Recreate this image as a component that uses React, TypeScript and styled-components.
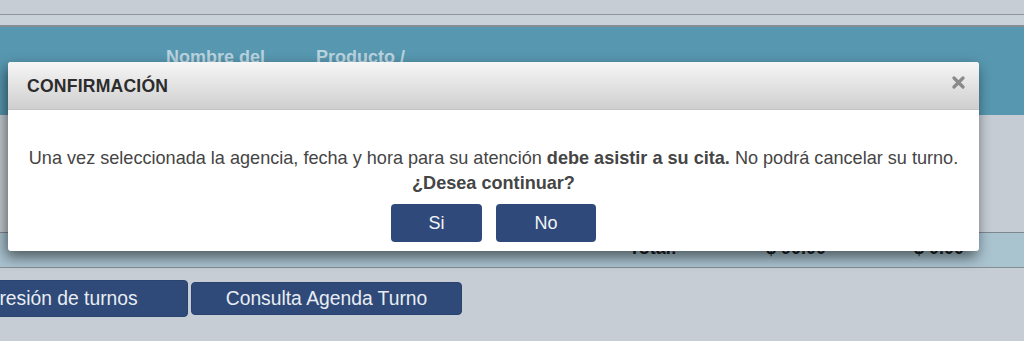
import React from "react";
import styled, { createGlobalStyle } from "styled-components";

const Global = createGlobalStyle`
  html, body { margin: 0; padding: 0; }
  body {
    background: #c6cdd5;
    font-family: "Liberation Sans", Arial, sans-serif;
    width: 1024px;
    height: 341px;
    overflow: hidden;
  }
`;

const Page = styled.div`
  position: relative;
  width: 1024px;
  height: 341px;
  overflow: hidden;
  background: #c6cdd5;
`;

const TopBand = styled.div`
  height: 14px;
  border-bottom: 1px solid #8e969e;
`;

const SubBand = styled.div`
  height: 10px;
  background: #c9d2d9;
  border-bottom: 2px solid #858d95;
`;

const TableHead = styled.div`
  height: 88px;
  background: #5797b0;
  display: flex;
  align-items: flex-start;
  padding-top: 20px;
  box-sizing: border-box;
`;

const HeadCell = styled.div<{ $w: number }>`
  width: ${(p) => p.$w}px;
  flex: none;
  color: #b9d3df;
  font-weight: bold;
  font-size: 18px;
`;

const TableBody = styled.div`
  height: 117px;
  background: #c5ccd3;
  border-bottom: 1px solid #7f878e;
`;

const TotalRow = styled.div`
  height: 35px;
  background: #a9c3cf;
  border-bottom: 1px solid #858d94;
  display: flex;
  align-items: flex-end;
  padding-bottom: 8px;
  box-sizing: border-box;
`;

const TotalCell = styled.div<{ $w: number }>`
  width: ${(p) => p.$w}px;
  flex: none;
  font-weight: bold;
  font-size: 18px;
  color: #1e2328;
`;

const ActionBar = styled.div`
  display: flex;
  align-items: flex-start;
  gap: 3px;
  margin-left: -83px;
  padding-top: 12px;
`;

const ActionButton = styled.button<{ $h: number; $mt: number }>`
  width: 271px;
  height: ${(p) => p.$h}px;
  margin-top: ${(p) => p.$mt}px;
  background: #2f4a78;
  border: 1px solid #2a4470;
  border-radius: 4px;
  color: #e9edf3;
  font-family: "Liberation Sans", Arial, sans-serif;
  font-size: 19.3px;
  padding: 0;
`;

const Modal = styled.div`
  position: absolute;
  left: 8px;
  top: 62px;
  width: 971px;
  background: #fff;
  border-radius: 3px;
  box-shadow: -2px 6px 14px rgba(0, 0, 0, 0.55);
  overflow: hidden;
`;

const ModalHeader = styled.div`
  height: 48px;
  background: linear-gradient(#f6f6f6, #cfcfcf);
  display: flex;
  align-items: center;
  justify-content: space-between;
  padding: 0 14px 0 19px;
  box-sizing: border-box;
  border-bottom: 1px solid #c4c4c4;
`;

const ModalTitle = styled.div`
  font-weight: bold;
  font-size: 17.6px;
  color: #2c2c2c;
  letter-spacing: 0.2px;
  padding-top: 2px;
`;

const Close = styled.svg`
  width: 13px;
  height: 13px;
  margin-top: -6px;
`;

const ModalBody = styled.div`
  padding: 36px 6px 9px;
  text-align: center;
  color: #454545;
  font-size: 18.1px;
  line-height: 25px;
`;

const Question = styled.div`
  font-weight: bold;
`;

const Choices = styled.div`
  display: flex;
  justify-content: center;
  gap: 14px;
  margin-top: 8px;
`;

const ChoiceButton = styled.button<{ $w: number }>`
  width: ${(p) => p.$w}px;
  height: 38px;
  background: #2f4a7a;
  border: none;
  border-radius: 4px;
  color: #f2f4f8;
  font-family: "Liberation Sans", Arial, sans-serif;
  font-size: 18px;
  padding: 0;
`;

export default function App() {
  return (
    <Page>
      <Global />
      <TopBand />
      <SubBand />
      <TableHead>
        <HeadCell $w={166} />
        <HeadCell $w={150}>Nombre del</HeadCell>
        <HeadCell $w={150}>Producto /</HeadCell>
      </TableHead>
      <TableBody />
      <TotalRow>
        <TotalCell $w={629} />
        <TotalCell $w={137}>Total:</TotalCell>
        <TotalCell $w={148}>$ 90.00</TotalCell>
        <TotalCell $w={100}>$ 0.00</TotalCell>
      </TotalRow>
      <ActionBar>
        <ActionButton $h={37} $mt={0}>Impresión de turnos</ActionButton>
        <ActionButton $h={33} $mt={2}>Consulta Agenda Turno</ActionButton>
      </ActionBar>
      <Modal>
        <ModalHeader>
          <ModalTitle>CONFIRMACIÓN</ModalTitle>
          <Close viewBox="0 0 13 13" aria-label="Cerrar">
            <path
              d="M2 2 L11 11 M11 2 L2 11"
              stroke="#8a8a8a"
              strokeWidth="3.2"
              strokeLinecap="round"
            />
          </Close>
        </ModalHeader>
        <ModalBody>
          <div>
            Una vez seleccionada la agencia, fecha y hora para su atención{" "}
            <b>debe asistir a su cita.</b> No podrá cancelar su turno.
          </div>
          <Question>¿Desea continuar?</Question>
          <Choices>
            <ChoiceButton $w={91}>Si</ChoiceButton>
            <ChoiceButton $w={100}>No</ChoiceButton>
          </Choices>
        </ModalBody>
      </Modal>
    </Page>
  );
}
